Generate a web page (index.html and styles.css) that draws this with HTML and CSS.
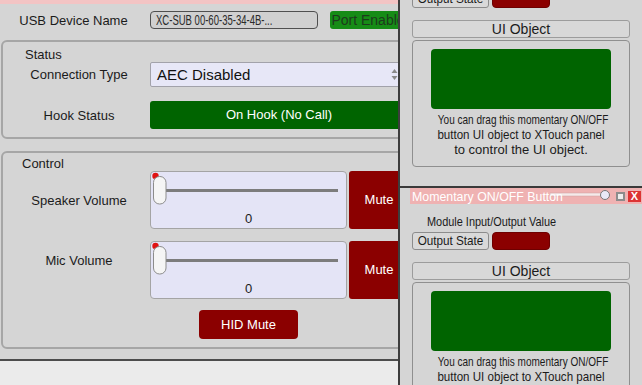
FILE: index.html
```html
<!DOCTYPE html>
<html lang="en">
<head>
    <meta charset="UTF-8">
    <meta name="viewport" content="width=device-width, initial-scale=1.0">
    <title>XC-SUB Device</title>
    <link rel="stylesheet" href="styles.css">
</head>
<body>

<div class="screen">
    <div class="device-panel">
        <div class="top-strip"></div>

        <div class="usb-row">
            <div class="usb-label">USB Device Name</div>
            <div class="name-box"><span class="narrow">XC-SUB 00-60-35-34-4B-...</span></div>
            <div class="port-btn">Port Enable</div>
        </div>

        <div class="group status-group">
            <div class="group-title">Status</div>
            <div class="row">
                <div class="row-label">Connection Type</div>
                <div class="select-box">
                    <span>AEC Disabled</span>
                    <svg width="7" height="13" viewBox="0 0 7 13">
                        <path d="M3.5 1 L6.5 5 L0.5 5 Z" fill="#8a8a8a"/>
                        <path d="M3.5 12 L6.5 8 L0.5 8 Z" fill="#8a8a8a"/>
                    </svg>
                </div>
            </div>
            <div class="row hook-row">
                <div class="row-label">Hook Status</div>
                <div class="hook-btn">On Hook (No Call)</div>
            </div>
        </div>

        <div class="group control-group">
            <div class="group-title control-title">Control</div>
            <div class="row">
                <div class="row-label">Speaker Volume</div>
                <div class="slider">
                    <svg class="slider-track" width="195" height="40" viewBox="0 0 195 40">
                        <rect x="15" y="17" width="172" height="3" fill="#7c7c7c"/>
                        <circle cx="4.5" cy="4" r="3.2" fill="#e01212"/>
                        <rect x="2.5" y="4.5" width="12.5" height="27.5" rx="6" fill="#f5f5f5" stroke="#8c8c8c"/>
                    </svg>
                    <div class="slider-value">0</div>
                </div>
                <div class="mute-btn">Mute</div>
            </div>
            <div class="row mic-row">
                <div class="row-label mic-label">Mic Volume</div>
                <div class="slider">
                    <svg class="slider-track" width="195" height="40" viewBox="0 0 195 40">
                        <rect x="15" y="17" width="172" height="3" fill="#7c7c7c"/>
                        <circle cx="4.5" cy="4" r="3.2" fill="#e01212"/>
                        <rect x="2.5" y="4.5" width="12.5" height="27.5" rx="6" fill="#f5f5f5" stroke="#8c8c8c"/>
                    </svg>
                    <div class="slider-value">0</div>
                </div>
                <div class="mute-btn">Mute</div>
            </div>
            <div class="row hid-row">
                <div class="row-label"></div>
                <div class="hid-wrap"><div class="hid-btn">HID Mute</div></div>
            </div>
        </div>

        <div class="panel-foot"></div>
    </div>

    <div class="window-stack">
        <div class="module-window first-window">
            <div class="title-bar">
                <div class="title-text"><span>Momentary ON/OFF Button</span></div>
                <svg width="61" height="14" viewBox="0 0 61 14">
                    <rect x="0" y="4" width="52" height="3" fill="#f6eaea" stroke="#c9a0a0" stroke-width="0.5"/>
                    <circle cx="55" cy="6" r="4.5" fill="#e9e9f7" stroke="#777"/>
                </svg>
                <span class="win-restore"></span>
                <span class="win-close">X</span>
            </div>
            <div class="io-label"><span>Module Input/Output Value</span></div>
            <div class="io-row">
                <div class="state-btn"><span>Output State</span></div>
                <div class="state-led"></div>
            </div>
            <div class="ui-head">UI Object</div>
            <div class="ui-body">
                <div class="ui-button"></div>
                <p class="ui-hint">
                    <span class="hint-1">You can drag this momentary ON/OFF</span>
                    <span class="hint-2">button UI object to XTouch panel</span>
                    <span>to control the UI object.</span>
                </p>
            </div>
        </div>

        <div class="module-window">
            <div class="title-bar">
                <div class="title-text"><span>Momentary ON/OFF Button</span></div>
                <svg width="61" height="14" viewBox="0 0 61 14">
                    <rect x="0" y="4" width="52" height="3" fill="#f6eaea" stroke="#c9a0a0" stroke-width="0.5"/>
                    <circle cx="55" cy="6" r="4.5" fill="#e9e9f7" stroke="#777"/>
                </svg>
                <span class="win-restore"></span>
                <span class="win-close">X</span>
            </div>
            <div class="io-label"><span>Module Input/Output Value</span></div>
            <div class="io-row">
                <div class="state-btn"><span>Output State</span></div>
                <div class="state-led"></div>
            </div>
            <div class="ui-head">UI Object</div>
            <div class="ui-body">
                <div class="ui-button"></div>
                <p class="ui-hint">
                    <span class="hint-1">You can drag this momentary ON/OFF</span>
                    <span class="hint-2">button UI object to XTouch panel</span>
                    <span>to control the UI object.</span>
                </p>
            </div>
        </div>
    </div>
</div>

</body>
</html>
```

FILE: styles.css
```css
body {
    margin: 0;
    font-family: "Liberation Sans", Arial, sans-serif;
    color: #1b1b1b;
}
.screen {
    display: flex;
    width: 642px;
    height: 385px;
    overflow: hidden;
    background-color: #d5d5d5;
}

/* left device panel */
.device-panel {
    width: 398px;
    flex: none;
    display: flex;
    flex-direction: column;
    overflow: hidden;
}
.top-strip {
    height: 4px;
    flex: none;
    background-color: #f3c4c4;
}
.usb-row {
    display: flex;
    align-items: center;
    height: 18px;
    margin-top: 7px;
    flex: none;
}
.usb-label {
    width: 147px;
    flex: none;
    text-align: center;
    font-size: 13px;
}
.name-box {
    flex: none;
    margin-left: 3px;
    width: 168px;
    height: 18px;
    box-sizing: border-box;
    border: 1px solid #4f4f4f;
    border-radius: 4px;
    background-color: #d0d0d0;
    padding-left: 5px;
    font-size: 14px;
    line-height: 16px;
    color: #2a2a2a;
    overflow: hidden;
    white-space: nowrap;
}
.narrow {
    display: inline-block;
    transform: scaleX(0.68);
    transform-origin: left center;
}
.port-btn {
    flex: none;
    margin-left: 12px;
    width: 76px;
    height: 18px;
    background-color: #168c16;
    border-radius: 3px;
    color: #1d3a1d;
    font-size: 14px;
    line-height: 18px;
    text-align: center;
    white-space: nowrap;
}

.group {
    flex: none;
    margin-left: 1px;
    width: 440px;
    box-sizing: border-box;
    border: 2px solid #a6a6a6;
    border-radius: 6px;
    padding-left: 5px;
}
.status-group {
    margin-top: 11px;
    height: 99px;
}
.control-group {
    margin-top: 12px;
    height: 198px;
}
.group-title {
    font-size: 13px;
    line-height: 15px;
    padding-top: 5px;
    padding-left: 17px;
}
.control-title {
    padding-top: 4px;
    padding-left: 14px;
    line-height: 14px;
}
.row {
    display: flex;
    align-items: center;
}
.row-label {
    width: 142px;
    flex: none;
    text-align: center;
    font-size: 13px;
}
.select-box {
    flex: none;
    width: 256px;
    height: 25px;
    box-sizing: border-box;
    border: 1px solid #a2a2aa;
    border-radius: 2px;
    background-color: #e7e7f7;
    display: flex;
    align-items: center;
    justify-content: space-between;
    padding: 0 7px 0 6px;
    font-size: 15px;
    color: #111;
}
.hook-row {
    margin-top: 14px;
}
.hook-btn {
    flex: none;
    width: 258px;
    height: 28px;
    background-color: #006400;
    color: #fff;
    border-radius: 3px;
    font-size: 13px;
    line-height: 28px;
    text-align: center;
}

.slider {
    flex: none;
    width: 197px;
    height: 58px;
    box-sizing: border-box;
    border: 1px solid #a4a4a4;
    border-radius: 4px;
    background-color: #e4e4f6;
}
.slider-track {
    display: block;
}
.slider-value {
    font-size: 13px;
    line-height: 14px;
    text-align: center;
}
.mute-btn {
    flex: none;
    margin-left: 2px;
    width: 60px;
    height: 58px;
    background-color: #8b0000;
    border-radius: 3px;
    color: #fff;
    font-size: 13px;
    line-height: 58px;
    text-align: center;
}
.mic-row {
    margin-top: 12px;
}
.mic-label {
    padding-bottom: 20px;
}
.hid-row {
    margin-top: 11px;
}
.hid-wrap {
    width: 197px;
    flex: none;
    display: flex;
    justify-content: center;
}
.hid-btn {
    width: 99px;
    height: 29px;
    background-color: #8b0000;
    border-radius: 4px;
    color: #fff;
    font-size: 13px;
    line-height: 29px;
    text-align: center;
}
.panel-foot {
    flex: 1;
    margin-top: 10px;
    border-top: 2px solid #4c4c4c;
    background-color: #ebebeb;
}

/* floating module windows */
.window-stack {
    flex: none;
    width: 242px;
    border-left: 2px solid #3d3d3d;
    background-color: #d5d5d5;
    overflow: hidden;
    display: flex;
    flex-direction: column;
}
.module-window {
    flex: none;
    border-top: 2px solid #3a3a3a;
    padding-bottom: 19px;
}
.first-window {
    margin-top: -56px;
}
.title-bar {
    margin-left: 10px;
    height: 16px;
    background-color: #efb2b2;
    display: flex;
    align-items: center;
}
.title-text {
    width: 136px;
    flex: none;
    padding-left: 2px;
    color: #fff;
    font-size: 13px;
    white-space: nowrap;
}
.title-text span {
    display: inline-block;
    transform: scaleX(0.95);
    transform-origin: left center;
}
.title-bar svg {
    flex: none;
    margin-left: 2px;
}
.win-restore {
    flex: none;
    margin-left: 5px;
    width: 9px;
    height: 9px;
    box-sizing: border-box;
    border: 2px solid #8c8c8c;
    background-color: #eeeeee;
}
.win-close {
    flex: none;
    margin-left: 3px;
    width: 13px;
    height: 11px;
    background-color: #dc3434;
    color: #fff;
    font-size: 11px;
    font-weight: bold;
    line-height: 11px;
    text-align: center;
}
.io-label {
    margin-top: 10px;
    padding-left: 27px;
    font-size: 13px;
    line-height: 15px;
    white-space: nowrap;
}
.io-label span {
    display: inline-block;
    transform: scaleX(0.84);
    transform-origin: left center;
}
.io-row {
    margin-top: 3px;
    padding-left: 12px;
    display: flex;
    gap: 3px;
    height: 18px;
}
.state-btn {
    width: 77px;
    box-sizing: border-box;
    border: 1px solid #8c8c8c;
    border-radius: 3px;
    background-color: #d9d9d9;
    font-size: 13px;
    line-height: 16px;
    text-align: center;
    white-space: nowrap;
}
.state-btn span {
    display: inline-block;
    transform: scaleX(0.9);
}
.state-led {
    width: 58px;
    box-sizing: border-box;
    border: 1px solid #6e0000;
    border-radius: 4px;
    background-color: #8b0000;
}
.ui-head {
    margin: 12px 12px 0;
    height: 18px;
    box-sizing: border-box;
    border: 1px solid #9c9c9c;
    border-radius: 3px;
    background-color: #d8d8d8;
    font-size: 14px;
    line-height: 16px;
    text-align: center;
}
.ui-body {
    margin: 2px 12px 0;
    border: 1px solid #8f8f8f;
    border-radius: 4px;
    padding: 8px 0 9px;
}
.ui-button {
    margin: 0 auto;
    width: 180px;
    height: 60px;
    background-color: #006400;
    border-radius: 4px;
}
.ui-hint {
    margin: 3px 0 0;
    font-size: 13px;
    line-height: 15px;
    text-align: center;
}
.ui-hint span {
    display: block;
    white-space: nowrap;
}
.hint-1 {
    transform: scaleX(0.77);
}
.hint-2 {
    transform: scaleX(0.89);
}
```
